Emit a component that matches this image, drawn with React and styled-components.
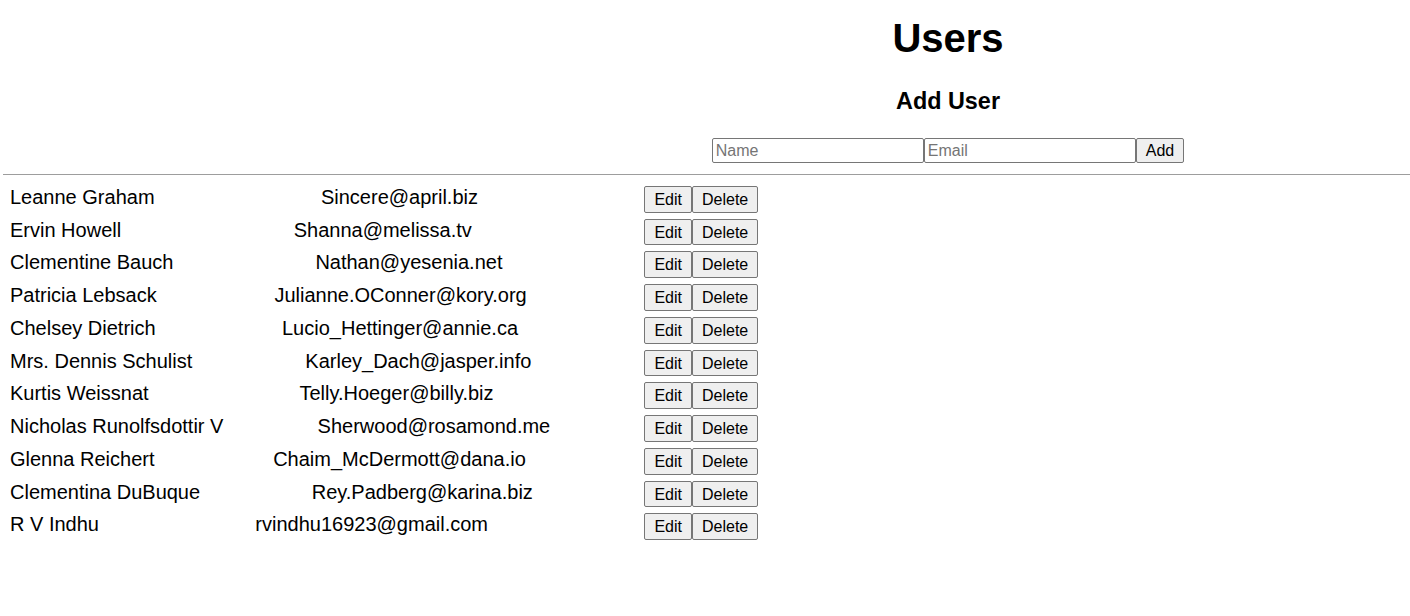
import React from "react";
import styled, { createGlobalStyle } from "styled-components";

const GlobalStyle = createGlobalStyle`
  html, body { margin: 0; padding: 0; background: #fff; }
  body {
    font-family: "Liberation Sans", Arial, sans-serif;
    font-size: 20px;
    color: #000;
    overflow: hidden;
  }
`;

const Page = styled.div`
  padding: 0 8px;
`;

const Header = styled.header`
  padding-left: 486px;
  text-align: center;
`;

const Title = styled.h1`
  margin: 14.5px 0 0;
  font-size: 40px;
  font-weight: 700;
  line-height: 46px;
`;

const SubTitle = styled.h3`
  margin: 27.4px 0 0;
  font-size: 23.4px;
  font-weight: 700;
  line-height: 26.9px;
`;

const AddForm = styled.form`
  display: flex;
  justify-content: center;
  margin-top: 23.2px;
  height: 25px;
`;

const Field = styled.input`
  box-sizing: border-box;
  width: 212px;
  height: 25px;
  margin: 0;
  padding: 2px 3px 0;
  border: 1px solid #767676;
  border-radius: 2px;
  font-family: "Liberation Sans", Arial, sans-serif;
  font-size: 16px;
  color: #000;
  background: #fff;
  &::placeholder { color: #757575; }
`;

const Button = styled.button`
  box-sizing: border-box;
  height: ${(p) => p.$h || "26.75px"};
  margin: 0;
  padding: 1px 9px 0;
  border: 1px solid #767676;
  border-radius: 2px;
  background: #efefef;
  color: #000;
  font-family: "Liberation Sans", Arial, sans-serif;
  font-size: 16px;
  line-height: 1;
  cursor: pointer;
`;

const Divider = styled.hr`
  margin: 11px -8px 0 -5px;
  border: 0;
  border-top: 1px solid #9d9d9d;
  height: 0;
`;

const List = styled.div`
  display: flex;
  flex-direction: column;
  gap: 6px;
  margin-top: 11px;
  padding-left: 2px;
`;

const Row = styled.div`
  display: flex;
  align-items: flex-start;
`;

const Info = styled.div`
  display: flex;
  width: 634.4px;
  line-height: 23px;
`;

const Cell = styled.span`
  flex: 1 1 auto;
  white-space: nowrap;
`;

const Actions = styled.div`
  display: flex;
`;

const users = [
  ["Leanne Graham", "Sincere@april.biz"],
  ["Ervin Howell", "Shanna@melissa.tv"],
  ["Clementine Bauch", "Nathan@yesenia.net"],
  ["Patricia Lebsack", "Julianne.OConner@kory.org"],
  ["Chelsey Dietrich", "Lucio_Hettinger@annie.ca"],
  ["Mrs. Dennis Schulist", "Karley_Dach@jasper.info"],
  ["Kurtis Weissnat", "Telly.Hoeger@billy.biz"],
  ["Nicholas Runolfsdottir V", "Sherwood@rosamond.me"],
  ["Glenna Reichert", "Chaim_McDermott@dana.io"],
  ["Clementina DuBuque", "Rey.Padberg@karina.biz"],
  ["R V Indhu", "rvindhu16923@gmail.com"],
];

export default function App() {
  return (
    <Page>
      <GlobalStyle />
      <Header>
        <Title>Users</Title>
        <SubTitle>Add User</SubTitle>
        <AddForm onSubmit={(e) => e.preventDefault()}>
          <Field placeholder="Name" />
          <Field placeholder="Email" />
          <Button type="submit" $h="25px">Add</Button>
        </AddForm>
      </Header>
      <Divider />
      <List>
        {users.map(([name, email]) => (
          <Row key={email}>
            <Info>
              <Cell>{name}</Cell>
              <Cell>{email}</Cell>
            </Info>
            <Actions>
              <Button>Edit</Button>
              <Button>Delete</Button>
            </Actions>
          </Row>
        ))}
      </List>
    </Page>
  );
}
